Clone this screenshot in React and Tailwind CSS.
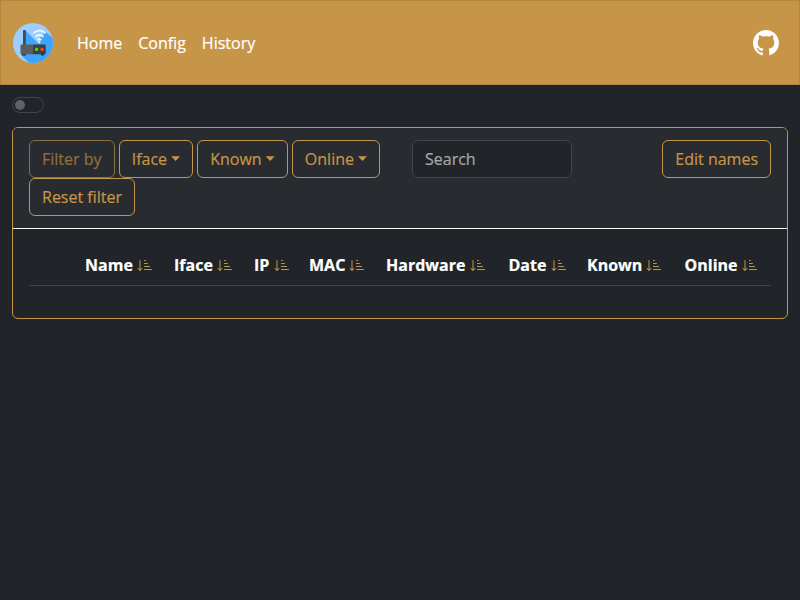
import React from "react";
import { BsGithub, BsSortDownAlt } from "react-icons/bs";

const columns = ["Name", "Iface", "IP", "MAC", "Hardware", "Date", "Known", "Online"];
const filters = ["Iface", "Known", "Online"];

const button =
  "inline-block whitespace-nowrap rounded-[6px] border border-[#c79548] px-3 py-[6px] align-middle leading-6 text-[#c79548]";

function Logo() {
  return (
    <svg className="block size-10" viewBox="0 0 40 40">
      <defs>
        <clipPath id="disc">
          <circle cx="20" cy="20" r="20" />
        </clipPath>
      </defs>
      <g clipPath="url(#disc)">
        <rect width="40" height="40" fill="#9dceff" />
        <path d="M12 7 L26 21 L28 13 L33 9 L44 19 V44 H20 L8 32 Z" fill="#3fa4fc" />
      </g>
      <rect x="10" y="7" width="2.8" height="16" rx="1" fill="#454b54" />
      <path d="M9 31h4v1.5H9zM28 31h3v1.5h-3z" fill="#2d3035" />
      <rect x="7.5" y="21.5" width="13" height="9.7" rx="1.2" fill="#5c5c5f" />
      <path d="M20 21.5h11.5q1.2 0 1.2 1.2v7.3q0 1.2-1.2 1.2H20z" fill="#3b3f43" />
      <rect x="22" y="24.7" width="3.2" height="3.2" rx="0.8" fill="#65c900" />
      <rect x="27.5" y="24.7" width="3.2" height="3.2" rx="0.8" fill="#f04416" />
      <g fill="none" stroke="#e8f3fc" strokeWidth="1.9">
        <path d="M20.3 10.2Q26.5 5 32.7 10.2" />
        <path d="M22.4 13.8Q26.5 10 30.6 13.8" />
        <path d="M24.6 17Q26.5 15.4 28.4 17" />
      </g>
      <circle cx="26.5" cy="19" r="1" fill="#e8f3fc" />
    </svg>
  );
}

export default function App() {
  return (
    <div className="min-h-screen bg-[#212529] font-['Open_Sans',sans-serif] text-base leading-6 text-white [-webkit-text-stroke:0.2px]">
      <nav className="flex h-[85px] items-center border border-[#b38641] bg-[#c79548] pr-5 pl-3">
        <Logo />
        <div className="ml-6 flex gap-4">
          <a>Home</a>
          <a>Config</a>
          <a>History</a>
        </div>
        <BsGithub className="ml-auto size-[26px]" />
      </nav>

      <div className="px-3 pt-3">
        <div className="flex h-4 w-8 items-center rounded-full border border-[#424549] pl-[2px]">
          <span className="size-[10px] rounded-full bg-[#5f6266]" />
        </div>
      </div>

      <section className="mx-3 mt-[14px] h-[192px] overflow-hidden rounded-[6px] border border-[#c79548]">
        <header className="flex h-[101px] items-start border-b border-white bg-[#282b2f] px-4 pt-3">
          <div className="w-[367px]">
            <div className="flex gap-[4.16px]">
              <button className={`${button} opacity-65`}>Filter by</button>
              {filters.map((name) => (
                <button key={name} className={button}>
                  {name}
                  <span className="ml-[4px] inline-block h-[4.8px] w-[9px] bg-[#c79548] align-[4.08px] [clip-path:polygon(0_0,100%_0,50%_100%)]" />
                </button>
              ))}
            </div>
            <button className={`${button} block`}>Reset filter</button>
          </div>
          <input
            placeholder="Search"
            className="ml-4 h-[38px] w-40 rounded-[6px] border border-[#424549] bg-[#212529] px-3 outline-none placeholder:text-[#a6a8aa]"
          />
          <button className={`${button} ml-auto`}>Edit names</button>
        </header>

        <div className="mx-4 mt-4 grid h-[41px] grid-cols-[48px_89px_80px_55px_77px_122.5px_78.5px_97.5px_94.5px] border-b border-[#424649] pt-2 font-bold">
          <span />
          {columns.map((name) => (
            <div key={name} className="pl-2 whitespace-nowrap">
              {name} <BsSortDownAlt className="inline-block size-4 align-[-2px] text-[#c79548]" />
            </div>
          ))}
        </div>
      </section>
    </div>
  );
}
